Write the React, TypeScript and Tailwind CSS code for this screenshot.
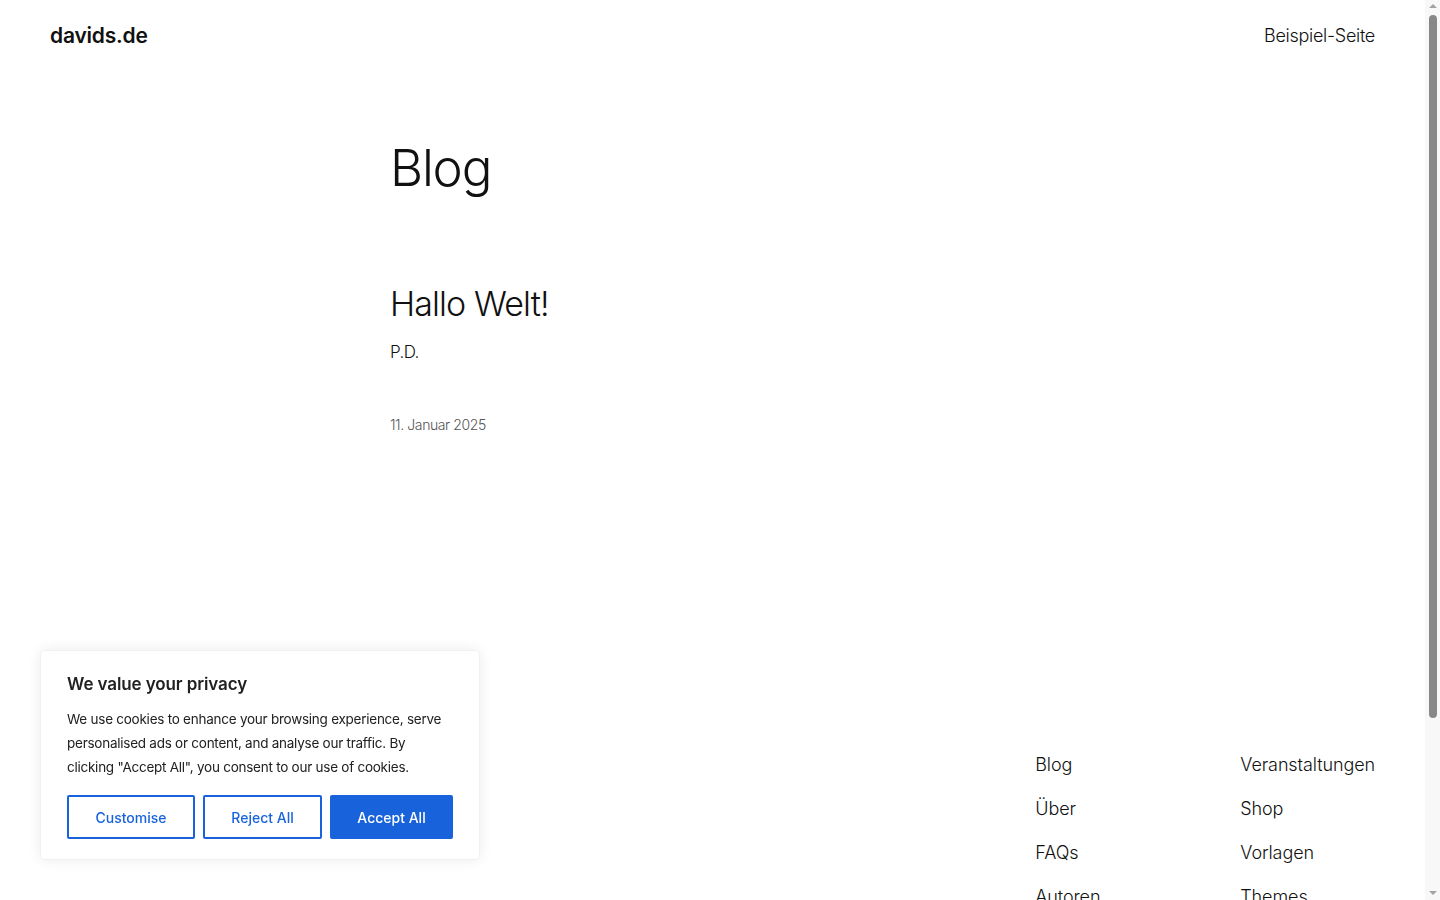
const footerLeft = ['Blog', 'Über', 'FAQs', 'Autoren']
const footerRight = ['Veranstaltungen', 'Shop', 'Vorlagen', 'Themes']

export default function App() {
  return (
    <div className="min-h-screen bg-white font-['Inter',sans-serif] text-[#111111]">
      <div className="w-[1425px]">
        <header className="flex h-[70px] items-center justify-between px-[50px] pt-[1px]">
          <a className="text-[21px] font-semibold tracking-[-0.2px]">davids.de</a>
          <nav className="text-[18px] font-light tracking-[-0.3px]">Beispiel-Seite</nav>
        </header>

        <main className="mx-auto w-[645px] pt-[68px] pb-[316px]">
          <h1 className="text-[51px] leading-[60px] font-light tracking-[-1.2px]">Blog</h1>
          <article className="mt-[84px]">
            <h2 className="text-[34px] leading-[44px] font-light tracking-[-0.9px]">Hallo Welt!</h2>
            <p className="mt-[14px] text-[17px] font-light tracking-[-0.6px]">P.D.</p>
            <p className="mt-[48px] text-[14px] font-light tracking-[-0.4px] text-[#555]">11. Januar 2025</p>
          </article>
        </main>

        <footer className="px-[50px] pb-[60px]">
          <div className="flex justify-end">
            <ul className="flex w-[205px] flex-col gap-[17px] text-[18px] font-light tracking-[-0.1px]">
              {footerLeft.map((item) => (
                <li key={item} className="leading-[27px]">{item}</li>
              ))}
            </ul>
            <ul className="flex flex-col gap-[17px] text-[18px] font-light tracking-[-0.1px]">
              {footerRight.map((item) => (
                <li key={item} className="leading-[27px]">{item}</li>
              ))}
            </ul>
          </div>
          <div className="mt-[60px] h-px bg-[#ddd]" />
          <div className="mt-6 flex justify-end text-[14px] font-light">
            <p>Gestaltet mit WordPress</p>
          </div>
        </footer>
      </div>

      <div className="fixed bottom-[40px] left-[40px] w-[440px] rounded-[5px] border border-[#f1f1f1] bg-white pt-[21px] pr-[24px] pb-[20px] pl-[26px] shadow-[0_0_14px_rgba(0,0,0,0.08)]">
        <p className="text-[17px] font-semibold tracking-[-0.1px] text-[#212121]">We value your privacy</p>
        <p className="mt-[10px] text-[13.5px] leading-[24px] tracking-[-0.25px] text-[#212121]">
          We use cookies to enhance your browsing experience, serve personalised ads or content, and analyse our traffic. By clicking "Accept All", you consent to our use of cookies.
        </p>
        <div className="mt-[16px] flex gap-[8px] text-[14px] font-medium">
          <button className="h-[44px] w-[128px] rounded-[2px] border-2 border-[#1863dc] text-[#1863dc]">Customise</button>
          <button className="h-[44px] w-[119px] rounded-[2px] border-2 border-[#1863dc] text-[#1863dc]">Reject All</button>
          <button className="h-[44px] w-[123px] rounded-[2px] border-2 border-[#1863dc] bg-[#1863dc] text-white">Accept All</button>
        </div>
      </div>

      <div className="fixed top-0 right-0 flex h-full w-[15px] flex-col items-center bg-[#f8f8f8]">
        <div className="mt-[4px] h-0 w-0 border-x-[4px] border-b-[4px] border-x-transparent border-b-[#a3a3a3]" />
        <div className="mt-[7px] h-[703px] w-[8px] rounded-full bg-[#888]" />
        <div className="mt-auto mb-[5px] h-0 w-0 border-x-[4px] border-t-[4px] border-x-transparent border-t-[#a3a3a3]" />
      </div>
    </div>
  )
}
